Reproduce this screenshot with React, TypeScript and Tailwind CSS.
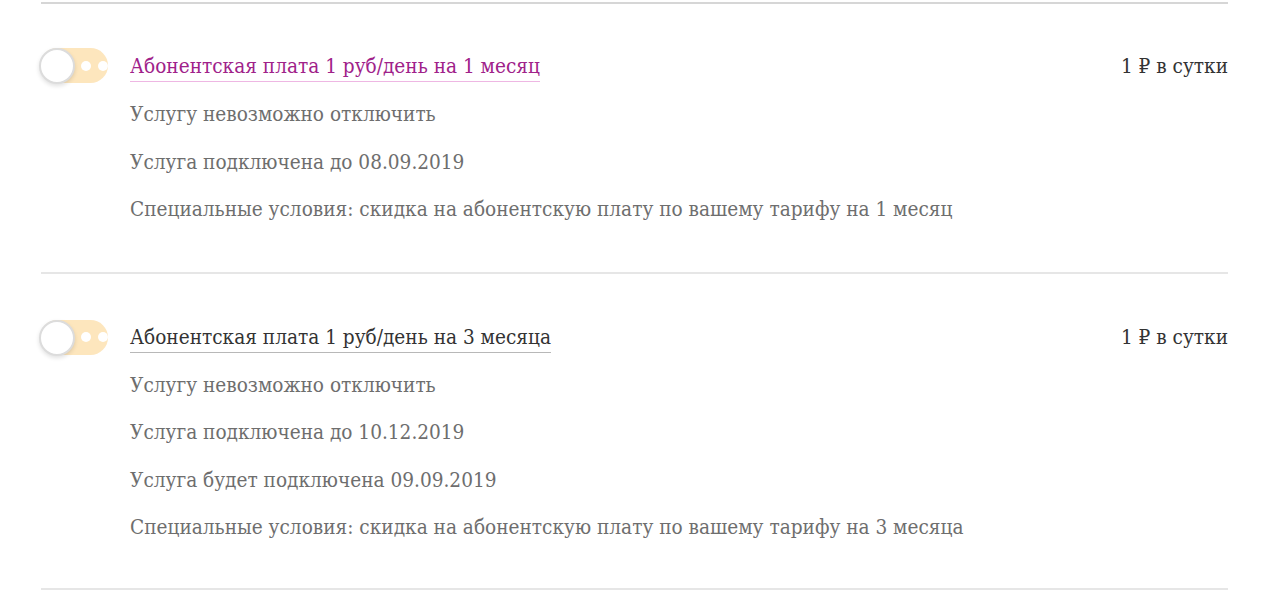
const font = { fontFamily: "'DejaVu Serif Condensed', 'DejaVu Serif', serif" };

function Toggle() {
  return (
    <div className="relative w-[70px] h-[36px]">
      <div className="ml-[1px] w-[68px] h-[35px] rounded-full bg-[#fde6bd] overflow-hidden flex items-center pl-[41px] gap-[7px]">
        <div className="w-[10px] h-[10px] shrink-0 rounded-full bg-white" />
        <div className="w-[10px] h-[10px] shrink-0 rounded-full bg-white" />
      </div>
      <div className="absolute left-0 top-0 w-[36px] h-[36px] rounded-full bg-white border-2 border-[#dcdcdc] shadow-[0_2px_4px_rgba(0,0,0,0.12)]" />
    </div>
  );
}

type Item = { title: string; active: boolean; pad: string; gap: string; lines: string[] };

const items: Item[] = [
  {
    title: "Абонентская плата 1 руб/день на 1 месяц",
    active: true,
    pad: "pt-[38px] pb-[38px]",
    gap: "mb-[1px]",
    lines: [
      "Услугу невозможно отключить",
      "Услуга подключена до 08.09.2019",
      "Специальные условия: скидка на абонентскую плату по вашему тарифу на 1 месяц",
    ],
  },
  {
    title: "Абонентская плата 1 руб/день на 3 месяца",
    active: false,
    pad: "pt-[40px] pb-[36px]",
    gap: "mb-0",
    lines: [
      "Услугу невозможно отключить",
      "Услуга подключена до 10.12.2019",
      "Услуга будет подключена 09.09.2019",
      "Специальные условия: скидка на абонентскую плату по вашему тарифу на 3 месяца",
    ],
  },
];

export default function App() {
  return (
    <div className="bg-white w-[1275px] h-[601px] overflow-hidden pt-[2px] pl-[41px] pr-[47px]" style={font}>
      <div className="border-t-2 border-[#d6d6d6]">
        {items.map((it, i) => (
          <div key={i} className={"border-b-2 border-[#e6e6e6] " + it.pad}>
            <div className={"flex items-center h-[48px] -ml-[2px] " + it.gap}>
              <div className="w-[91px] shrink-0">
                <Toggle />
              </div>
              <div className="flex-1">
                <span
                  className={
                    it.active
                      ? "text-[20.6px] text-[#a0228a] border-b border-[#eeb7e3] pb-[3px]"
                      : "text-[20.6px] text-[#333333] border-b border-[#b8b8b8] pb-[3px]"
                  }
                >
                  {it.title}
                </span>
              </div>
              <div className="text-[20.6px] text-[#333333]">1 ₽ в сутки</div>
            </div>
            <div className="flex flex-col pl-[89px]">
              {it.lines.map((l, j) => (
                <div key={j} className="h-[47.5px] flex items-center text-[20.6px] text-[#6e6e6e]">
                  {l}
                </div>
              ))}
            </div>
          </div>
        ))}
      </div>
    </div>
  );
}
